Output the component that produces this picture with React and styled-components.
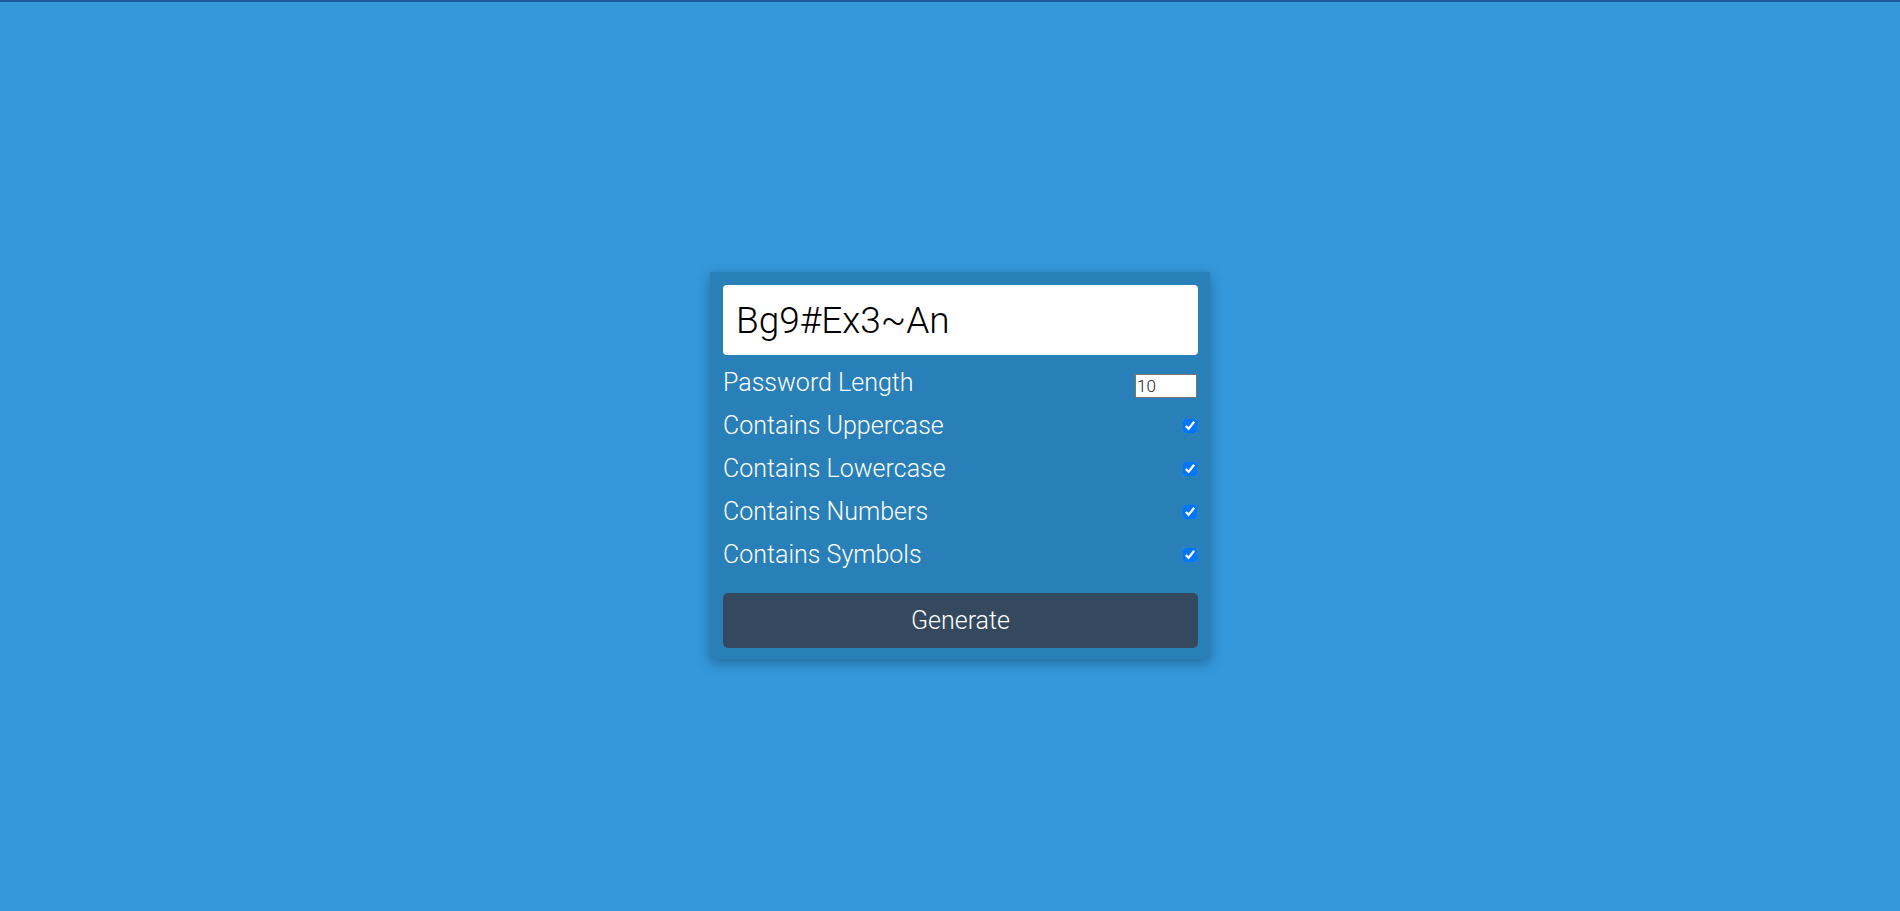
import styled, { createGlobalStyle } from 'styled-components'

const GlobalStyle = createGlobalStyle`
* { box-sizing: border-box; }
body {
  margin: 0;
  background: #3498db;
  font-family: Roboto, "Open Sans", sans-serif;
  font-weight: 300;
  color: #fff;
}`

const TopBar = styled.div`
height: 2px;
background: #22589c;`

const Page = styled.div`
height: 909px;
display: flex;
align-items: center;
justify-content: center;
padding: 18px 0 0 20px;`

const Card = styled.div`
width: 500px;
background: #2980b9;
padding: 13px 12px 11px 13px;
box-shadow: 0 4px 12px rgba(0, 0, 0, 0.3);`

const Result = styled.div`
background: #fff;
color: #000;
height: 70px;
border-radius: 4px;
display: flex;
align-items: center;
padding: 0 13px;
margin-bottom: 6px;
font-size: 37px;
font-weight: 300;`

const Setting = styled.div`
display: flex;
justify-content: space-between;
align-items: center;
height: 43px;
font-size: 25px;`

const LengthInput = styled.input`
width: 62px;
height: 24px;
margin: 6px 1px 0 0;
font-family: Roboto, sans-serif;
font-weight: 300;
font-size: 17px;
color: #222;
padding: 0 1px;
border: 1px solid #767676;`

const Check = styled.input`
width: 14px;
height: 14px;
margin: 0 1px 0 0;`

const Button = styled.button`
width: 100%;
height: 55px;
margin-top: 17px;
border: none;
border-radius: 5px;
background: #34495e;
color: #fff;
font-family: Roboto, sans-serif;
font-weight: 300;
font-size: 25px;`

const options = ['Contains Uppercase', 'Contains Lowercase', 'Contains Numbers', 'Contains Symbols']

export default function App() {
  return (
    <>
      <GlobalStyle />
      <TopBar />
      <Page>
        <Card>
          <Result>Bg9#Ex3~An</Result>
          <Setting>
            <span>Password Length</span>
            <LengthInput type="number" defaultValue={10} />
          </Setting>
          {options.map(o => (
            <Setting key={o}>
              <span>{o}</span>
              <Check type="checkbox" defaultChecked />
            </Setting>
          ))}
          <Button>Generate</Button>
        </Card>
      </Page>
    </>
  )
}
